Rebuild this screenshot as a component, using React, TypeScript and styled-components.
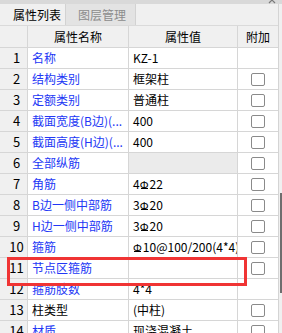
import React from 'react';
import styled, { createGlobalStyle } from 'styled-components';

const GlobalStyle = createGlobalStyle`
  html, body {
    margin: 0;
    padding: 0;
    background: #f0f0f0;
  }
  * {
    box-sizing: border-box;
  }
`;

const Panel = styled.div`
  position: relative;
  width: 282px;
  height: 333px;
  overflow: hidden;
  background: #f0f0f0;
  font-family: "Noto Sans CJK SC", "Noto Sans", sans-serif;
  font-size: 12px;
  color: #000;
`;

const TopStrip = styled.div`
  height: 4px;
  background: #d9d9d9;
  display: flex;
  justify-content: flex-end;
  align-items: flex-start;
  padding-right: 6px;
  overflow: hidden;
`;

const Body = styled.div`
  display: flex;
  height: 329px;
  overflow: hidden;
`;

const Main = styled.div`
  width: 279px;
  flex-shrink: 0;
  border-right: 1px solid #d4d4d4;
  display: flex;
  flex-direction: column;
  overflow: hidden;
`;

const ScrollTrack = styled.div`
  width: 3px;
  background: #f0f0f0;
  display: flex;
  flex-direction: column;
  align-items: flex-end;
`;

const ScrollThumb = styled.div`
  width: 2px;
  height: 100px;
  margin-top: 189px;
  flex-shrink: 0;
  background: #6e6e6e;
`;

const TabBar = styled.div`
  height: 22px;
  flex-shrink: 0;
  display: flex;
  border-bottom: 1px solid #dadada;
  background: #f0f0f0;
`;

const Tab = styled.div<{ $active?: boolean }>`
  width: ${p => (p.$active ? '66px' : '70px')};
  padding-left: ${p => (p.$active ? '13px' : '12px')};
  display: flex;
  align-items: center;
  line-height: 14px;
  color: ${p => (p.$active ? '#000' : '#8c8c8c')};
  background: ${p => (p.$active ? '#f0f0f0' : '#e3e3e3')};
  border-right: 1px solid #d2d2d2;
`;

const Grid = styled.div`
  flex-shrink: 0;
  display: grid;
  grid-template-columns: 28px 101px 109px 41px;
  grid-auto-rows: 21px;
  grid-template-rows: 22px;
  background: #fff;
`;

const HeadCell = styled.div`
  display: flex;
  align-items: center;
  justify-content: center;
  background: #f0f0f0;
  border-right: 1px solid #d6d6d6;
  border-bottom: 1px solid #d6d6d6;
  line-height: 14px;
  white-space: nowrap;
`;

const NumCell = styled.div`
  display: flex;
  align-items: center;
  justify-content: center;
  padding-left: 6px;
  background: #f0f0f0;
  border-right: 1px solid #d6d6d6;
  border-bottom: 1px solid #d6d6d6;
  font-size: 13px;
  line-height: 14px;
`;

const NameCell = styled.div<{ $plain?: boolean }>`
  display: flex;
  align-items: center;
  padding-left: 4px;
  color: ${p => (p.$plain ? '#000' : '#2237f5')};
  background: #fff;
  border-right: 1px solid #d6d6d6;
  border-bottom: 1px solid #d6d6d6;
  white-space: nowrap;
  overflow: hidden;
  line-height: 14px;
`;

const ValueCell = styled.div<{ $locked?: boolean }>`
  display: flex;
  align-items: center;
  padding-left: 4px;
  background: ${p => (p.$locked ? '#ebebeb' : '#fff')};
  border-right: 1px solid #d6d6d6;
  border-bottom: 1px solid #d6d6d6;
  white-space: nowrap;
  overflow: hidden;
  line-height: 14px;
`;

const AttachCell = styled.div`
  display: flex;
  align-items: center;
  justify-content: center;
  background: #fff;
  border-right: 1px solid #d6d6d6;
  border-bottom: 1px solid #d6d6d6;
`;

const Check = styled.span`
  width: 14px;
  height: 13px;
  border: 1px solid #8a8a8a;
  border-radius: 2px;
  background: #fff;
`;

const Rebar = styled.span`
  position: relative;
  display: inline-block;
  font-size: 11px;
  margin-right: 1px;
  &::after {
    content: '';
    position: absolute;
    left: 1px;
    right: 1px;
    bottom: 2px;
    height: 1px;
    background: #000;
  }
`;

const Highlight = styled.div`
  position: absolute;
  left: 7px;
  top: 257px;
  width: 240px;
  height: 29px;
  border: 3px solid #f03434;
  pointer-events: none;
`;

interface Row {
  no: number;
  name: string;
  value: string;
  check: boolean;
  locked?: boolean;
  plain?: boolean;
}

const rows: Row[] = [
  { no: 1, name: '名称', value: 'KZ-1', check: false },
  { no: 2, name: '结构类别', value: '框架柱', check: true },
  { no: 3, name: '定额类别', value: '普通柱', check: true },
  { no: 4, name: '截面宽度(B边)(...', value: '400', check: true },
  { no: 5, name: '截面高度(H边)(...', value: '400', check: true },
  { no: 6, name: '全部纵筋', value: '', check: true, locked: true },
  { no: 7, name: '角筋', value: '4Φ22', check: true },
  { no: 8, name: 'B边一侧中部筋', value: '3Φ20', check: true },
  { no: 9, name: 'H边一侧中部筋', value: '3Φ20', check: true },
  { no: 10, name: '箍筋', value: 'Φ10@100/200(4*4)', check: true },
  { no: 11, name: '节点区箍筋', value: '', check: true },
  { no: 12, name: '箍筋肢数', value: '4*4', check: false },
  { no: 13, name: '柱类型', value: '(中柱)', check: true, plain: true },
  { no: 14, name: '材质', value: '现浇混凝土', check: true },
];

// steel grade mark is written as Φ in the data
const renderValue = (v: string) => {
  const parts = v.split('Φ');
  return parts.map((part, i) => (
    <React.Fragment key={i}>
      {i > 0 && <Rebar>Φ</Rebar>}
      {part}
    </React.Fragment>
  ));
};

const App: React.FC = () => {
  return (
    <Panel>
      <GlobalStyle />
      <TopStrip>
        <svg width="8" height="4" viewBox="0 0 8 4">
          <path d="M1 -3 L7 3 M7 -3 L1 3" stroke="#7a7a7a" strokeWidth="1.2" />
        </svg>
      </TopStrip>
      <Body>
        <Main>
          <TabBar>
            <Tab $active>属性列表</Tab>
            <Tab>图层管理</Tab>
          </TabBar>
          <Grid>
            <HeadCell />
            <HeadCell>属性名称</HeadCell>
            <HeadCell>属性值</HeadCell>
            <HeadCell>附加</HeadCell>
            {rows.map(r => (
              <React.Fragment key={r.no}>
                <NumCell>{r.no}</NumCell>
                <NameCell $plain={r.plain}>{r.name}</NameCell>
                <ValueCell $locked={r.locked}>{renderValue(r.value)}</ValueCell>
                <AttachCell>{r.check && <Check />}</AttachCell>
              </React.Fragment>
            ))}
          </Grid>
        </Main>
        <ScrollTrack>
          <ScrollThumb />
        </ScrollTrack>
      </Body>
      <Highlight />
    </Panel>
  );
};

export default App;
